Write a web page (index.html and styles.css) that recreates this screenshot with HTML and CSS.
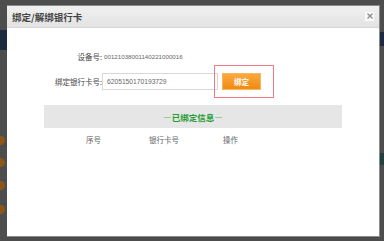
FILE: index.html
```html
<!DOCTYPE html>
<html lang="zh-CN">
<head>
  <meta charset="UTF-8">
  <title>绑定/解绑银行卡</title>
  <link rel="stylesheet" href="styles.css">
</head>
<body>
  <div class="page-behind">
    <div class="nav-strip left"></div>
    <div class="nav-strip right"></div>
    <div class="teal-strip"></div>
    <span class="dot" style="top: 136px"></span>
    <span class="dot" style="top: 158px"></span>
    <span class="dot" style="top: 181px"></span>
    <span class="dot" style="top: 205px"></span>
  </div>

  <div class="dialog">
    <div class="dialog-title">
      <span>绑定/解绑银行卡</span>
      <button class="close-btn" title="关闭">
        <svg width="6" height="6" viewBox="0 0 6 6"><path d="M0.5 0.5L5.5 5.5M5.5 0.5L0.5 5.5" stroke="#888" stroke-width="1.2"/></svg>
      </button>
    </div>
    <div class="dialog-body">
      <div class="form-row device-row">
        <label>设备号:</label>
        <span class="device-no">00121038001140221000016</span>
      </div>
      <div class="form-row">
        <label>绑定银行卡号:</label>
        <input type="text" class="card-input" value="6205150170193729">
        <div class="bind-box">
          <button class="bind-btn">绑定</button>
        </div>
      </div>
      <div class="bound-title">—已绑定信息—</div>
      <div class="bound-head">
        <span class="col-no">序号</span>
        <span class="col-card">银行卡号</span>
        <span class="col-op">操作</span>
      </div>
    </div>
  </div>
</body>
</html>
```

FILE: styles.css
```css
html, body {
  margin: 0;
  height: 100%;
}
body {
  background: #4d4d4d;
  font-family: "Noto Sans CJK SC", "Liberation Sans", sans-serif;
  padding: 5px 0 0 7px;
  box-sizing: border-box;
  position: relative;
  overflow: hidden;
}
.page-behind .nav-strip {
  position: absolute;
  top: 30px;
  height: 20px;
  width: 7px;
  background: #1e2a3e;
}
.page-behind .left { left: 0; }
.page-behind .right { right: 0; width: 4px; top: 32px; height: 14px; }
.page-behind .teal-strip {
  position: absolute;
  right: 0;
  top: 153px;
  width: 4px;
  height: 12px;
  background: #22403e;
}
.page-behind .dot {
  position: absolute;
  left: -4px;
  width: 9px;
  height: 9px;
  border-radius: 50%;
  background: #8c5716;
}
.dialog {
  position: relative;
  width: 373px;
  height: 232px;
  background: #fff;
  border: 1px solid #8a8a8a;
  border-left: none;
  box-sizing: border-box;
}
.dialog-title {
  height: 21px;
  background: linear-gradient(#f1f1f1, #e3e3e3);
  border-bottom: 1px solid #d6d6d6;
  display: flex;
  align-items: center;
  justify-content: space-between;
  padding: 0 5px 0 5px;
  font-size: 9.5px;
  font-weight: bold;
  color: #444;
}
.close-btn {
  width: 9px;
  height: 9px;
  padding: 0;
  border: none;
  background: #fafafa;
  display: flex;
  align-items: center;
  justify-content: center;
  margin-top: -1px;
}
.dialog-body {
  padding: 20px 37px 0 37px;
}
.form-row {
  display: flex;
  align-items: center;
  height: 17px;
}
.form-row label {
  width: 58px;
  text-align: right;
  font-size: 7.5px;
  color: #444;
  flex-shrink: 0;
}
.device-row {
  margin-bottom: 8px;
}
.device-no {
  font-family: "Liberation Sans", sans-serif;
  font-size: 6.2px;
  color: #666;
  margin-left: 2px;
}
.card-input {
  width: 116px;
  height: 17px;
  box-sizing: border-box;
  border: 1px solid #d8d8d8;
  padding: 0 4px;
  font-family: "Liberation Sans", sans-serif;
  font-size: 6.7px;
  color: #666;
  margin: 0;
}
.bind-box {
  margin-left: -4px;
  width: 60px;
  height: 33px;
  box-sizing: border-box;
  border: 1px solid #ea7c84;
  display: flex;
  align-items: center;
  justify-content: center;
}
.bind-btn {
  width: 39px;
  height: 17px;
  border: 1px solid #f7b560;
  background: linear-gradient(#fba93e, #f08a12);
  color: #fff;
  font-family: "Noto Sans CJK SC", sans-serif;
  font-size: 7.5px;
  font-weight: bold;
  padding: 0;
  margin-left: -5px;
}
.bound-title {
  margin-top: 15px;
  height: 23px;
  width: 298px;
  background: #e6e6e6;
  display: flex;
  align-items: center;
  justify-content: center;
  color: #1f9c33;
  font-size: 8.5px;
  font-weight: bold;
}
.bound-head {
  display: flex;
  font-size: 7.5px;
  color: #666;
  margin-top: 6px;
}
.col-no { margin-left: 42px; }
.col-card { margin-left: 48px; }
.col-op { margin-left: 44px; }
```
